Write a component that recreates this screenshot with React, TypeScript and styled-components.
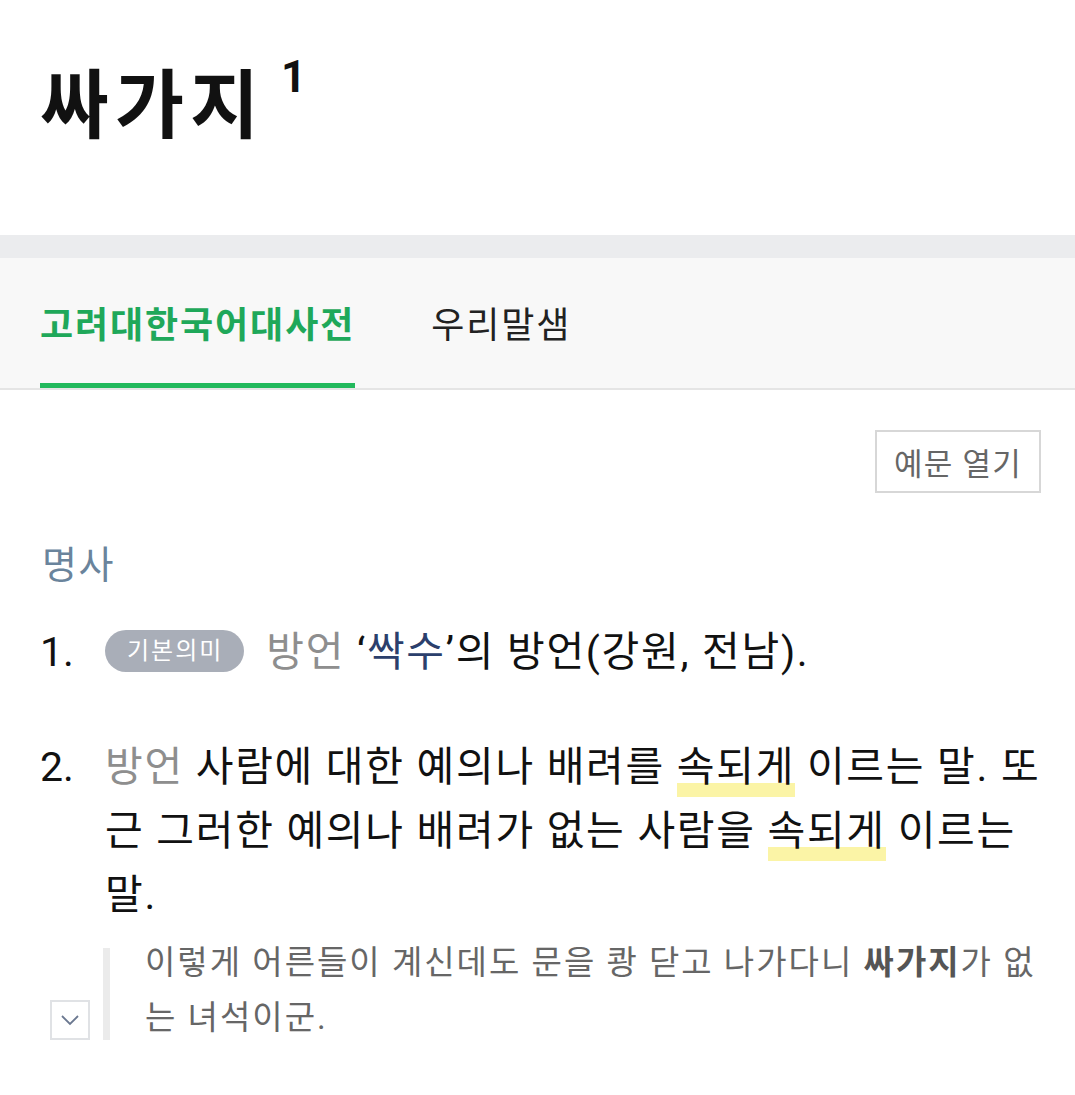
import React from "react";
import styled, { createGlobalStyle } from "styled-components";

const Global = createGlobalStyle`
  html, body { margin: 0; padding: 0; background: #ffffff; }
  body {
    font-family: "Roboto", "Noto Sans CJK KR", sans-serif;
    color: #111111;
    -webkit-font-smoothing: antialiased;
  }
  * { box-sizing: border-box; }
`;

const Page = styled.div`
  width: 1075px;
  min-height: 1095px;
  background: #ffffff;
`;

const Header = styled.header`
  display: flex;
  align-items: flex-start;
  padding: 56px 40px 79px;
`;

const Title = styled.h1`
  margin: 0;
  font-size: 75px;
  line-height: 100px;
  font-weight: 700;
  color: #111111;
  letter-spacing: 6px;
`;

const Sup = styled.sup`
  font-family: "Roboto", sans-serif;
  font-size: 44px;
  line-height: 44px;
  font-weight: 700;
  color: #111111;
  margin: -1px 0 0 16px;
  vertical-align: baseline;
`;

const Band = styled.div`
  height: 23px;
  background: #ebecee;
`;

const TabBar = styled.nav`
  display: flex;
  gap: 76px;
  height: 132px;
  padding: 0 40px;
  background: #f8f8f8;
  border-bottom: 2px solid #e5e5e5;
`;

const Tab = styled.div<{ $active?: boolean }>`
  display: flex;
  align-items: center;
  height: 130px;
  font-size: 36px;
  letter-spacing: 1.9px;
  font-weight: ${(p) => (p.$active ? 700 : 400)};
  color: ${(p) => (p.$active ? "#1fa85a" : "#222222")};
  border-bottom: 5px solid ${(p) => (p.$active ? "#22b95c" : "transparent")};
  padding-top: 2px;
`;

const Content = styled.main`
  padding: 40px 30px 40px 40px;
`;

const ToolRow = styled.div`
  display: flex;
  justify-content: flex-end;
  padding-right: 4px;
`;

const ExampleButton = styled.button`
  width: 166px;
  height: 63px;
  border: 2px solid #d7d7d7;
  background: #ffffff;
  color: #666666;
  font-family: "Roboto", "Noto Sans CJK KR", sans-serif;
  font-size: 31px;
  letter-spacing: 1.2px;
  padding: 0;
`;

const Pos = styled.div`
  margin-top: 42px;
  font-size: 38px;
  letter-spacing: 1.6px;
  line-height: 60px;
  color: #6a849c;
  padding-left: 2px;
`;

const Sense = styled.div<{ $gap: number }>`
  display: grid;
  grid-template-columns: 65px 1fr;
  margin-top: ${(p) => p.$gap}px;
`;

const Num = styled.div<{ $lh: number }>`
  font-size: 41px;
  line-height: ${(p) => p.$lh}px;
  color: #111111;
`;

const Def = styled.div<{ $lh: number }>`
  font-size: 41px;
  letter-spacing: 1.7px;
  line-height: ${(p) => p.$lh}px;
  color: #111111;
`;

const Badge = styled.span`
  display: inline-block;
  height: 42px;
  line-height: 42px;
  padding: 0 21px 0 22px;
  margin-right: 22px;
  border-radius: 21px;
  background: #a9aeb8;
  color: #ffffff;
  font-size: 24px;
  letter-spacing: 2px;
  vertical-align: 7px;
`;

const Region = styled.span`
  color: #8e8e8e;
`;

const Link = styled.span`
  color: #2b3f6c;
`;

const Mark = styled.span`
  padding-bottom: 6px;
  background: linear-gradient(to bottom, transparent 40px, #fbf4a6 40px);
`;

const ExampleRow = styled.div`
  display: grid;
  grid-template-columns: 65px 1fr;
  margin-top: 8px;
`;

const ToggleCell = styled.div`
  display: flex;
  align-items: flex-end;
  padding: 0 0 5px 10px;
`;

const Toggle = styled.button`
  display: flex;
  align-items: center;
  justify-content: center;
  width: 40px;
  height: 40px;
  padding: 0;
  border: 2px solid #e0e2e5;
  background: #ffffff;
`;

const Quote = styled.div`
  display: flex;
  margin-left: -2px;
`;

const Bar = styled.div`
  flex: none;
  width: 7px;
  margin: 13px 0 5px;
  background: #ebebeb;
`;

const QuoteText = styled.p`
  margin: 0;
  padding-left: 35px;
  font-size: 33px;
  letter-spacing: 2px;
  line-height: 55px;
  color: #666666;
`;

const Strong = styled.b`
  font-weight: 700;
  color: #555555;
`;

export default function App() {
  return (
    <Page>
      <Global />
      <Header>
        <Title>싸가지</Title>
        <Sup>1</Sup>
      </Header>
      <Band />
      <TabBar>
        <Tab $active>고려대한국어대사전</Tab>
        <Tab>우리말샘</Tab>
      </TabBar>
      <Content>
        <ToolRow>
          <ExampleButton>예문 열기</ExampleButton>
        </ToolRow>
        <Pos>명사</Pos>
        <Sense $gap={27}>
          <Num $lh={60}>1.</Num>
          <Def $lh={60}>
            <Badge>기본의미</Badge>
            <Region>방언</Region> ‘<Link>싹수</Link>’의 방언(강원, 전남).
          </Def>
        </Sense>
        <Sense $gap={53}>
          <Num $lh={64}>2.</Num>
          <Def $lh={64}>
            <Region>방언</Region> 사람에 대한 예의나 배려를 <Mark>속되게</Mark>{" "}
            이르는 말. 또 근 그러한 예의나 배려가 없는 사람을{" "}
            <Mark>속되게</Mark> 이르는 말.
          </Def>
        </Sense>
        <ExampleRow>
          <ToggleCell>
            <Toggle aria-label="예문 펼치기">
              <svg width="20" height="12" viewBox="0 0 20 12">
                <path
                  d="M2 2 L10 10 L18 2"
                  fill="none"
                  stroke="#6b7890"
                  strokeWidth="1.8"
                />
              </svg>
            </Toggle>
          </ToggleCell>
          <Quote>
            <Bar />
            <QuoteText>
              이렇게 어른들이 계신데도 문을 쾅 닫고 나가다니{" "}
              <Strong>싸가지</Strong>가 없는 녀석이군.
            </QuoteText>
          </Quote>
        </ExampleRow>
      </Content>
    </Page>
  );
}
